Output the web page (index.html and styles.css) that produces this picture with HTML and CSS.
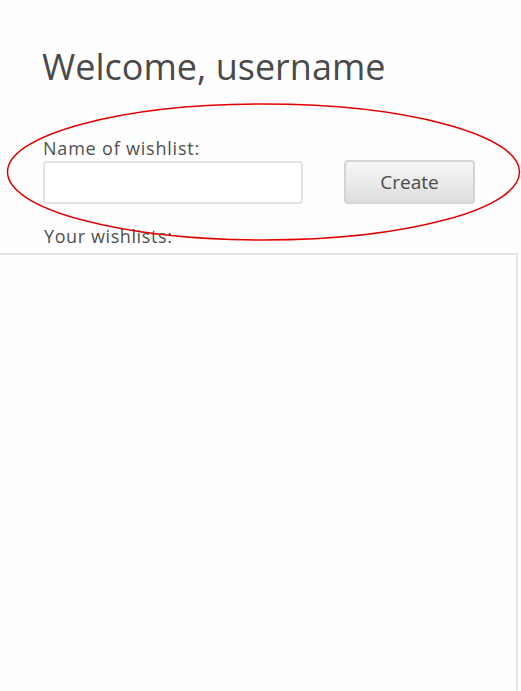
FILE: index.html
```html
<!DOCTYPE html>
<html>
<head>
<meta charset="utf-8">
<link rel="stylesheet" href="styles.css">
</head>
<body>
<div class="page">
  <header class="head">
    <h1 class="title">Welcome, username</h1>
  </header>
  <form class="create">
    <label class="label" for="wl">Name of wishlist:</label>
    <div class="row">
      <input class="input" id="wl" type="text">
      <button class="btn" type="button">Create</button>
    </div>
  </form>
  <div class="sub">Your wishlists:</div>
  <div class="list"></div>
  <svg class="ring" width="521" height="691" viewBox="0 0 521 691">
    <ellipse cx="263.5" cy="172" rx="256" ry="68" fill="none" stroke="#e00000" stroke-width="1.5"/>
  </svg>
</div>
</body>
</html>
```
FILE: styles.css
```css
html, body {
  margin: 0;
  padding: 0;
  background: #fefefe;
  height: 100%;
  overflow: hidden;
}
.page {
  position: relative;
  width: 521px;
  height: 691px;
  display: flex;
  flex-direction: column;
  font-family: "Open Sans", "Noto Sans", sans-serif;
  color: #4a4a4a;
}
.head {
  padding: 43px 0 0 42px;
}
.title {
  margin: 0;
  font-weight: 400;
  font-size: 36px;
  line-height: 48px;
  color: #4a4a4a;
}
.create {
  margin: 0;
  padding: 46px 0 0 43px;
  display: flex;
  flex-direction: column;
}
.label {
  font-size: 18px;
  line-height: 22px;
  letter-spacing: 0.8px;
  color: #4e4e4e;
}
.row {
  display: flex;
  align-items: flex-start;
  gap: 41px;
  margin-top: 2px;
}
.input {
  box-sizing: border-box;
  width: 260px;
  height: 43px;
  border: 2px solid #e2e2e2;
  border-radius: 4px;
  background: #fff;
  margin: 0;
  outline: none;
}
.btn {
  box-sizing: border-box;
  width: 131px;
  height: 44px;
  margin: -1px 0 0 0;
  border: 2px solid #d4d4d4;
  border-radius: 4px;
  background: linear-gradient(#f6f6f6, #dedede);
  font-family: "Open Sans", "Noto Sans", sans-serif;
  font-size: 19px;
  color: #4a4a4a;
  padding: 0;
}
.sub {
  padding: 21px 0 0 44px;
  font-size: 18px;
  line-height: 22px;
  letter-spacing: 0.6px;
  color: #4e4e4e;
}
.list {
  margin-top: 6px;
  width: 516px;
  flex: 1;
  border-top: 2px solid #e6e6e6;
  border-right: 2px solid #e6e6e6;
}
.ring {
  position: absolute;
  left: 0;
  top: 0;
  pointer-events: none;
}
```
